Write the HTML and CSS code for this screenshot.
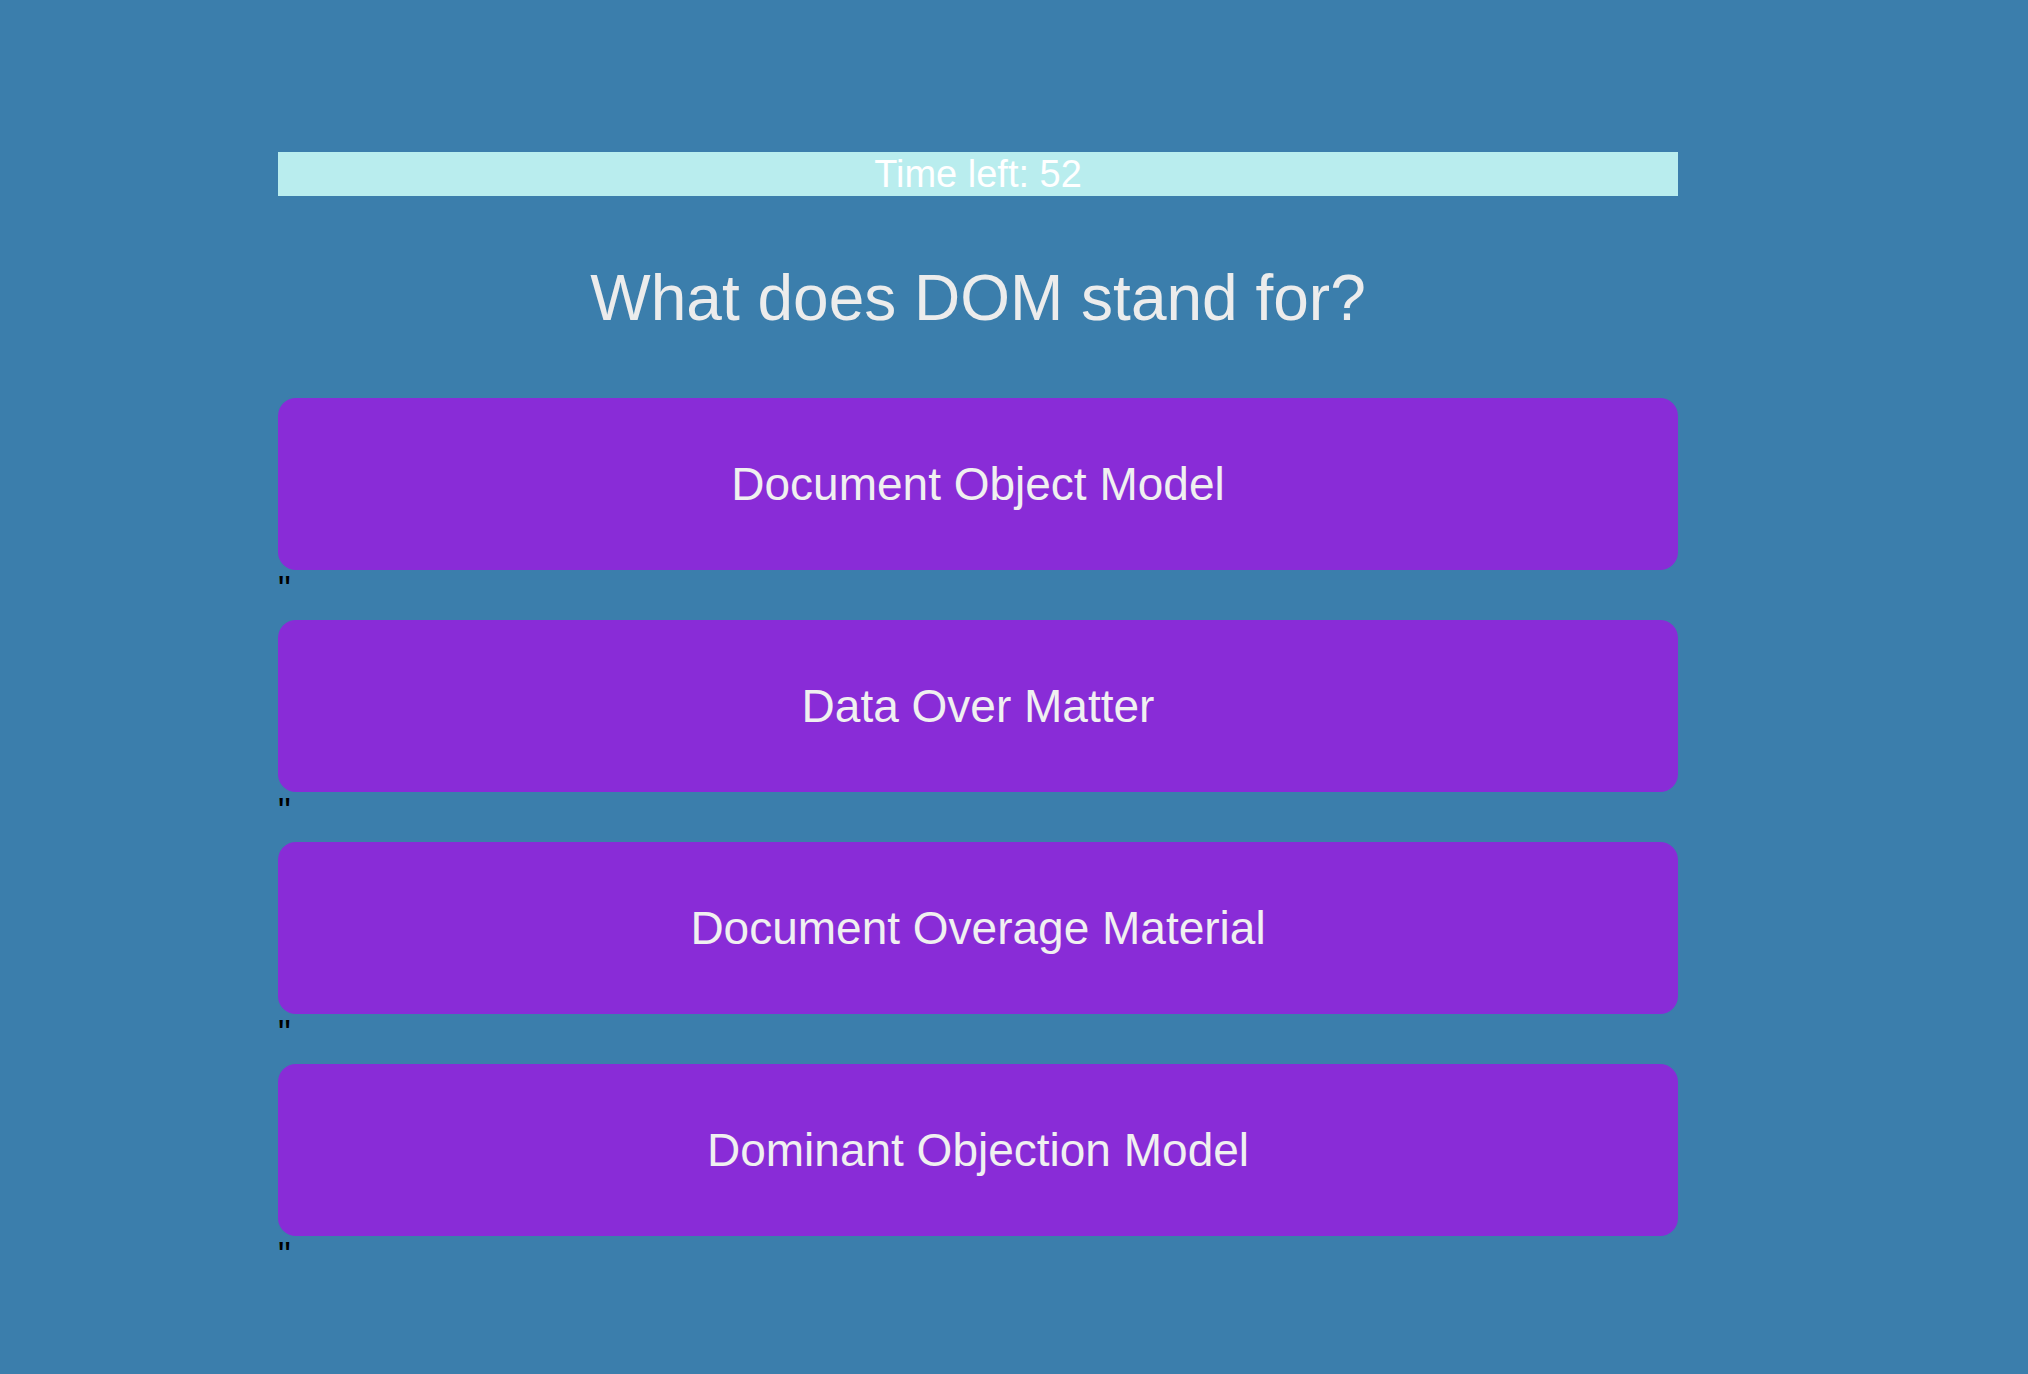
FILE: index.html
```html
<!DOCTYPE html>
<html>
<head>
<meta charset="utf-8">
<title>Quiz</title>
<link rel="stylesheet" href="styles.css">
</head>
<body>
<main class="quiz">
  <div class="timer">Time left: 52</div>
  <h1 class="question">What does DOM stand for?</h1>
  <div class="answers">
    <button class="answer">Document Object Model</button>
    <div class="stray">"</div>
    <button class="answer">Data Over Matter</button>
    <div class="stray">"</div>
    <button class="answer">Document Overage Material</button>
    <div class="stray">"</div>
    <button class="answer">Dominant Objection Model</button>
    <div class="stray">"</div>
  </div>
</main>
</body>
</html>
```
FILE: styles.css
```css
html, body {
  margin: 0;
  padding: 0;
}
body {
  background: #3b7eac;
  font-family: "Liberation Sans", Arial, Helvetica, sans-serif;
  min-height: 1374px;
}
.quiz {
  width: 1400px;
  margin-left: 278px;
  padding-top: 152px;
}
.timer {
  height: 44px;
  line-height: 44px;
  background: #b9edee;
  color: #ffffff;
  font-size: 38px;
  text-align: center;
}
.question {
  margin: 65px 0 63px;
  line-height: 74px;
  height: 74px;
  font-size: 64px;
  font-weight: normal;
  color: #ececec;
  text-align: center;
}
.answers {
  display: flex;
  flex-direction: column;
}
.answer {
  display: flex;
  align-items: center;
  justify-content: center;
  height: 172px;
  width: 100%;
  border: none;
  border-radius: 18px;
  background: #892cd7;
  color: #f0f0f0;
  font-family: "Liberation Sans", Arial, Helvetica, sans-serif;
  font-size: 46px;
  padding: 0;
}
.stray {
  height: 41px;
  line-height: 39px;
  margin-bottom: 9px;
  font-size: 36px;
  color: #000;
}
```
